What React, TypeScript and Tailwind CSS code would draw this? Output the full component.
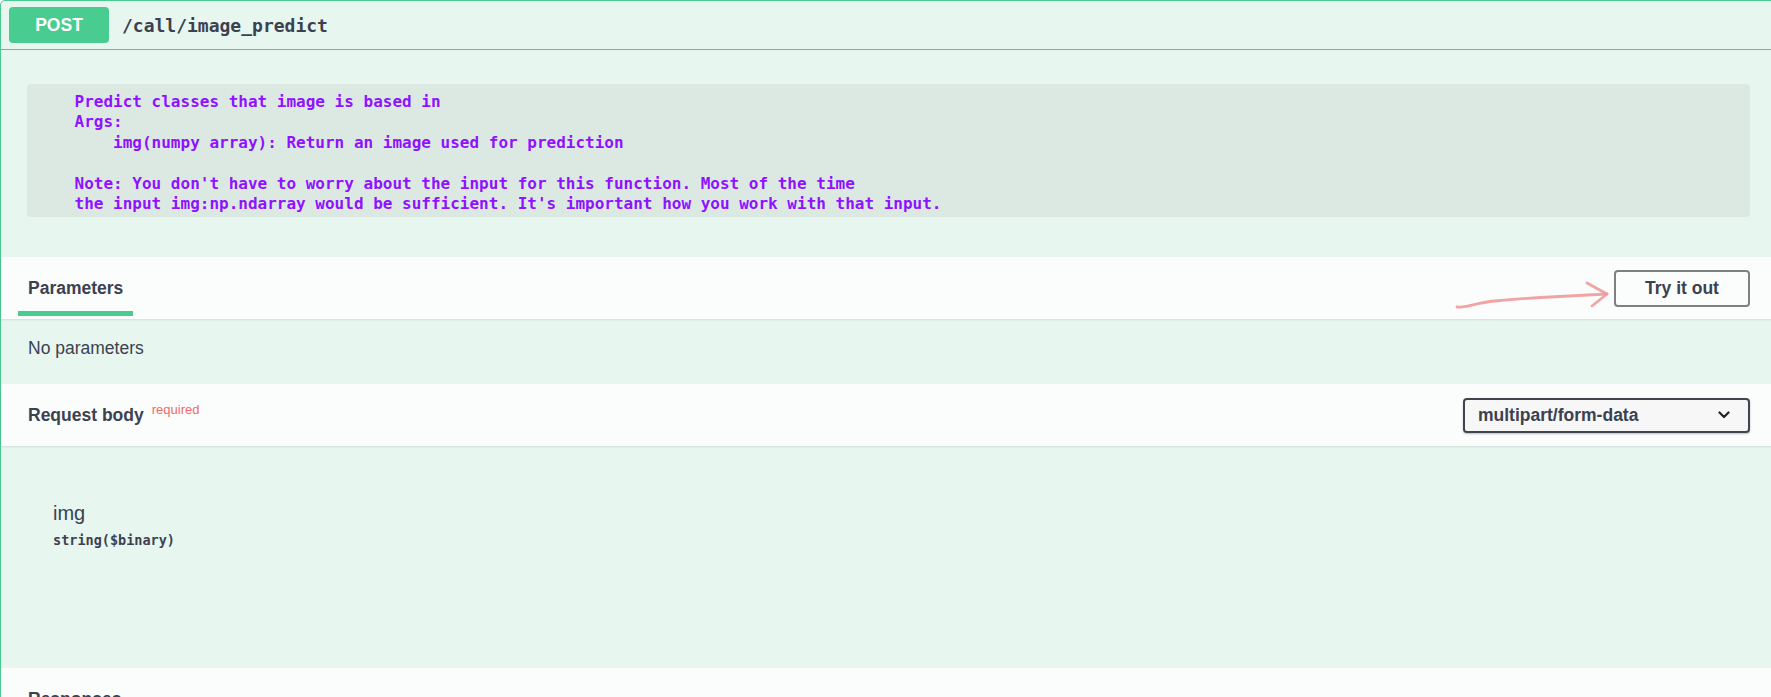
import React from "react";

const sans = { fontFamily: '"Liberation Sans", Arial, sans-serif' };
const mono = { fontFamily: '"DejaVu Sans Mono", "Liberation Mono", monospace' };

const desc = `    Predict classes that image is based in
    Args:
        img(numpy array): Return an image used for prediction

    Note: You don't have to worry about the input for this function. Most of the time
    the input img:np.ndarray would be sufficient. It's important how you work with that input.`;

export default function App() {
  return (
    <div className="relative w-full h-[697px] overflow-hidden bg-white" style={sans}>
      <div className="w-[1776px] border border-[#49cc90] rounded-tl-[5px] rounded-tr-[5px] bg-[#e7f6ef]">
        {/* summary */}
        <div className="h-[49px] flex items-center pl-[8px] border-b border-[#49cc90]">
          <div className="w-[100px] h-[36px] rounded-[4px] bg-[#49cc90] flex items-center justify-center text-white font-bold text-[17.5px]">
            POST
          </div>
          <div className="ml-[13px] text-[18px] font-bold text-[#3b4151]" style={mono}>
            /call/image_predict
          </div>
        </div>

        {/* description */}
        <div className="pt-[34px] pb-[40px] pl-[26px] pr-[25px]">
          <div className="h-[133px] rounded-[4px] bg-[#dce9e3] pt-[8px] pl-[9px]">
            <pre className="whitespace-pre text-[16px] leading-[20.4px] font-bold text-[#9012fe]" style={mono}>
              {desc}
            </pre>
          </div>
        </div>

        {/* parameters header */}
        <div className="h-[62px] flex items-end justify-between pl-[17px] pr-[25px] bg-[#fbfcfc] shadow-[0_1px_2px_rgba(0,0,0,0.1)] relative">
          <div className="flex flex-col pb-[3px]">
            <div className="px-[10px] text-[17.5px] leading-[22px] font-bold text-[#3b4151] mb-[12px]">Parameters</div>
            <div className="h-[5px] bg-[#49cc90]" />
          </div>
          <button className="self-center w-[136px] h-[37px] rounded-[4px] border-2 border-[#808080] bg-transparent text-[17.5px] font-bold text-[#3b4151]">
            Try it out
          </button>
        </div>

        {/* no parameters */}
        <div className="h-[65px] pt-[18px] pl-[27px]">
          <div className="text-[17.5px] leading-[22px] text-[#3b4151]">No parameters</div>
        </div>

        {/* request body header */}
        <div className="h-[62px] flex items-center justify-between pl-[27px] pr-[25px] bg-[#fbfcfc] shadow-[0_1px_2px_rgba(0,0,0,0.1)] relative">
          <div className="flex items-start">
            <span className="text-[17.5px] leading-[22px] font-bold text-[#3b4151]">Request body</span>
            <span className="ml-[8px] -mt-[1px] text-[13px] leading-[14px] text-[#ef6a6a]">required</span>
          </div>
          <div className="w-[287px] h-[35px] rounded-[4px] border-2 border-[#41444e] bg-[#f7f7f7] flex items-center justify-between pl-[13px] pr-[18px] shadow-[0_1px_2px_rgba(0,0,0,0.25)]">
            <span className="text-[17.5px] font-bold text-[#3b4151]">multipart/form-data</span>
            <svg width="12" height="8" viewBox="0 0 12 8" fill="none">
              <path d="M1.5 1.5 L6 6 L10.5 1.5" stroke="#1f2229" strokeWidth="2.2" strokeLinecap="round" strokeLinejoin="round" />
            </svg>
          </div>
        </div>

        {/* body */}
        <div className="h-[222px] pt-[55px] pl-[52px]">
          <div className="text-[20px] leading-[24px] text-[#3b4151]">img</div>
          <div className="mt-[6px] text-[13.5px] leading-[18px] font-bold text-[#3b4151]" style={mono}>
            string($binary)
          </div>
        </div>

        {/* responses header */}
        <div className="h-[62px] flex items-center pl-[27px] bg-[#fbfcfc]">
          <span className="text-[17.5px] leading-[22px] font-bold text-[#3b4151]">Responses</span>
        </div>
      </div>

      {/* hand-drawn arrow annotation */}
      <svg
        className="absolute left-[1450px] top-[279px]"
        width="165"
        height="36"
        viewBox="0 0 165 36"
        fill="none"
      >
        <path
          d="M7 28 C 15 29, 25 24, 45 22 S 80 19, 100 18 S 140 16, 157 15"
          stroke="#f09a9a"
          strokeWidth="2.8"
          strokeLinecap="round"
          opacity="0.9"
        />
        <path
          d="M137 4 L157 15 L142 27"
          stroke="#f09a9a"
          strokeWidth="2.8"
          strokeLinecap="round"
          strokeLinejoin="round"
          opacity="0.9"
        />
      </svg>
    </div>
  );
}
